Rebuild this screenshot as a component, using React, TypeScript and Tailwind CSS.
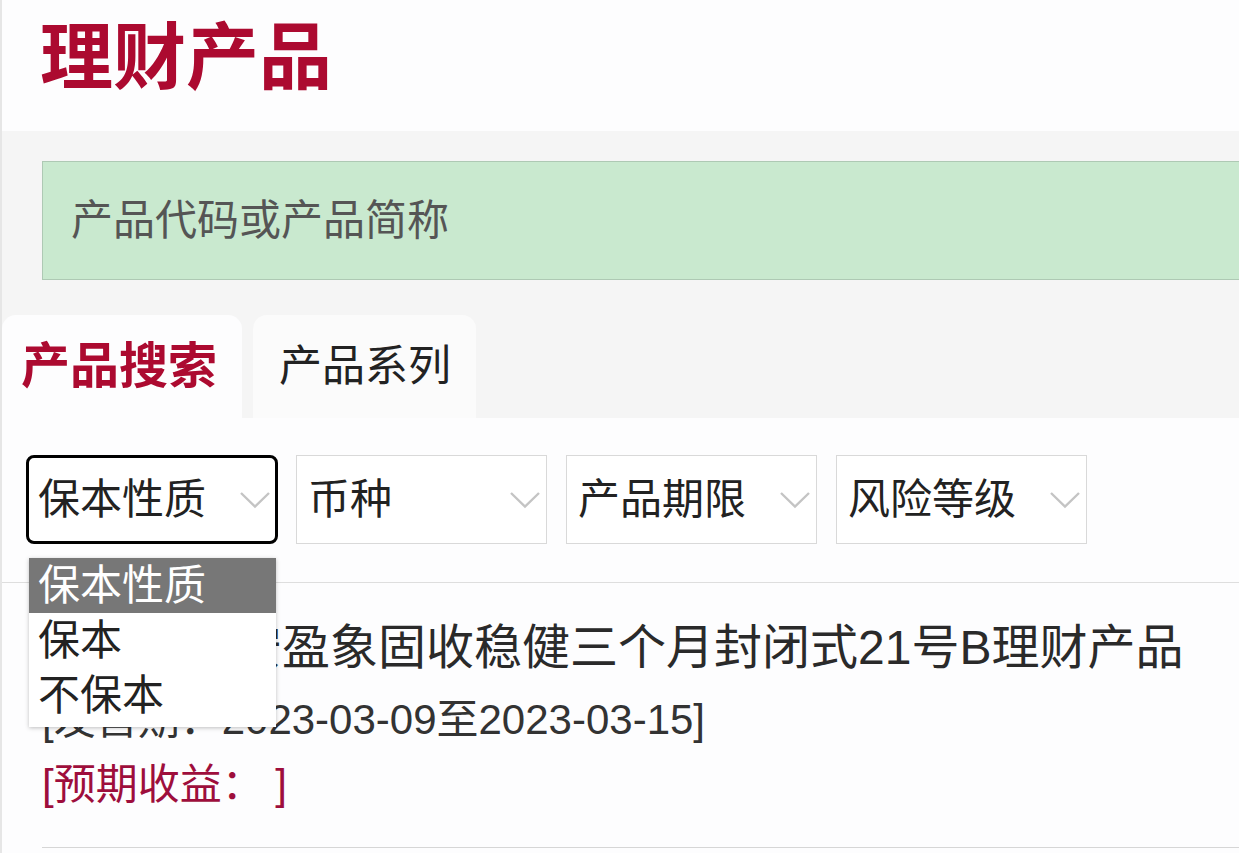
import React from "react";

const Chevron = () => (
  <svg width="32" height="18" viewBox="0 0 32 18" className="shrink-0">
    <polyline points="2,2 16,15.5 30,2" fill="none" stroke="#c4c4c4" strokeWidth="2.4" />
  </svg>
);

const Select = ({ label, focused }: { label: string; focused?: boolean }) => (
  <div
    className={
      focused
        ? "flex h-[89px] w-[252px] items-center justify-between rounded-[8px] border-[3px] border-black bg-white pl-[9px] pr-[4px]"
        : "flex h-[89px] w-[251px] items-center justify-between border border-[#d9d9d9] bg-white pl-[11px] pr-[5px]"
    }
  >
    <span className="text-[42px] leading-none text-[#222]">{label}</span>
    <Chevron />
  </div>
);

export default function App() {
  return (
    <div className="relative h-[853px] w-full overflow-hidden border-l-2 border-[#e6e6e6] bg-[#fdfdfe] font-['Liberation_Sans','Noto_Sans_CJK_SC',sans-serif]">
      {/* Header */}
      <div className="h-[131px] bg-[#fdfdfe] pl-[38px] pt-[21px]">
        <div className="text-[73px] font-bold leading-[73px] text-[#ac0a30]">理财产品</div>
      </div>

      {/* Gray section */}
      <div className="bg-[#f5f5f5] pt-[30px]">
        <div className="ml-[40px] flex h-[119px] items-center border border-r-0 border-[#aec9b4] bg-[#c9e9cf] pl-[28px]">
          <span className="text-[42px] leading-none text-[#555]">产品代码或产品简称</span>
        </div>
        <div className="mt-[35px] flex h-[103px] items-stretch">
          <div className="flex w-[240px] items-center rounded-t-[14px] bg-[#fdfdfe] pl-[19px]">
            <span className="text-[49px] font-bold leading-none text-[#ac0a30]">产品搜索</span>
          </div>
          <div className="ml-[11px] flex w-[223px] items-center rounded-t-[14px] bg-[#fbfbfb] pl-[26px]">
            <span className="text-[43px] leading-none text-[#222]">产品系列</span>
          </div>
        </div>
      </div>

      {/* Content */}
      <div className="bg-[#fdfdfe]">
        <div className="relative flex pl-[24px] pt-[37px]">
          <div className="relative">
            <Select label="保本性质" focused />
            <div className="absolute left-[3px] top-[103px] z-10 w-[247px] bg-white pb-[4px] shadow-[0_1px_4px_rgba(0,0,0,0.25)]">
              <div className="flex h-[55px] items-center bg-[#777777] pl-[9px] text-[42px] leading-none text-white">
                保本性质
              </div>
              <div className="flex h-[55px] items-center pl-[9px] text-[42px] leading-none text-[#222]">保本</div>
              <div className="flex h-[55px] items-center pl-[9px] text-[42px] leading-none text-[#222]">不保本</div>
            </div>
          </div>
          <div className="ml-[18px] flex gap-[19px]">
            <Select label="币种" />
            <Select label="产品期限" />
            <Select label="风险等级" />
          </div>
        </div>

        <div className="mt-[38px] h-px bg-[#dedede]" />

        <div className="ml-[40px] border-b border-[#d6d6d6] pb-[34px]">
          <div className="mt-[35px] whitespace-nowrap text-[48px] leading-[60px] text-[#2a2a2a]">
            信银理财安盈象固收稳健三个月封闭式21号B理财产品
          </div>
          <div className="mt-[14px] whitespace-nowrap text-[42px] leading-[56px] text-[#333]">
            [发售期：2023-03-09至2023-03-15]
          </div>
          <div className="mt-[9px] whitespace-nowrap text-[42px] leading-[56px] text-[#9e0e3c]">
            [预期收益： ]
          </div>
        </div>
      </div>
    </div>
  );
}
